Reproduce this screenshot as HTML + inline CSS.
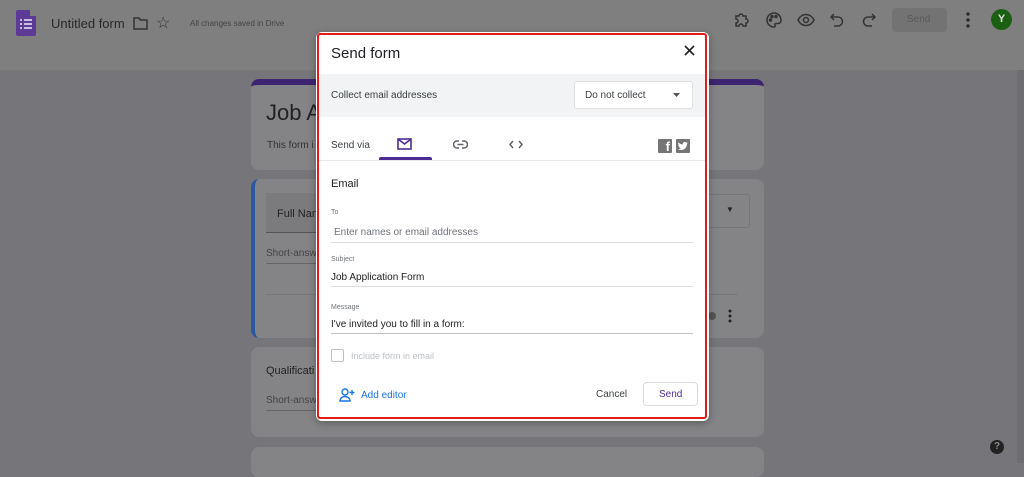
<!DOCTYPE html>
<html style="background:#767579"><head><meta charset="utf-8">
<style>
*{box-sizing:border-box;margin:0;padding:0}
html,body{background:#767579}
body{width:1024px;height:463px;overflow:hidden;font-family:"Liberation Sans",sans-serif;position:relative}
.top{position:absolute;left:0;top:0;width:1024px;height:71px;background:#7f7f7f;border-bottom:1px solid #777}
.abs{position:absolute}
.card{position:absolute;background:#848385;border-radius:8px}
.t{position:absolute;white-space:nowrap}
.dlg{position:absolute;left:316px;top:32px;width:393px;height:389px;background:#fff;border-radius:6px;box-shadow:0 2px 8px rgba(0,0,0,.3)}
.red{position:absolute;left:317px;top:33px;width:390px;height:386px;border:2px solid #e21b1b;border-radius:3px;pointer-events:none}
.line{position:absolute;height:1px;background:#dadce0}
</style></head><body>
<div class="top"></div>
<div class="abs" style="left:16px;top:10px;width:20px;height:26px;background:#5e3a97;border-radius:2px"></div>
<div class="abs" style="left:30px;top:10px;width:6px;height:6px;background:#7f7f7f"></div>
<svg class="abs" style="left:20px;top:18px" width="12" height="12"><g fill="#c9bde0"><rect x="0" y="1" width="2" height="2"/><rect x="4" y="1" width="8" height="2"/><rect x="0" y="5" width="2" height="2"/><rect x="4" y="5" width="8" height="2"/><rect x="0" y="9" width="2" height="2"/><rect x="4" y="9" width="8" height="2"/></g></svg>
<div class="t" style="left:51px;top:16px;font-size:13px;color:#2a2a2a">Untitled form</div>
<svg class="abs" style="left:133px;top:16px" width="15" height="14"><path d="M1 2h5l1.5 2H14v9H1z" fill="none" stroke="#333" stroke-width="1.5"/></svg>
<div class="t" style="left:156px;top:13px;font-size:16px;color:#333">☆</div>
<div class="t" style="left:190px;top:19px;font-size:8px;color:#444">All changes saved in Drive</div>
<svg class="abs" style="left:733px;top:12px" width="16" height="16" fill="none" stroke="#333" stroke-width="1.5"><path d="M3 4h3a2 2 0 014 0h3v3a2 2 0 010 4v3h-3a2 2 0 00-4 0H3v-3a2 2 0 000-4z"/></svg>
<svg class="abs" style="left:766px;top:12px" width="16" height="16" fill="none" stroke="#333" stroke-width="1.5"><path d="M8 1a7 7 0 000 14c1 0 1.5-.7 1-1.6-.5-.9 0-1.9 1-1.9h2a3 3 0 003-3C15 4 12 1 8 1z"/><circle cx="4.5" cy="8" r="1" fill="#333"/><circle cx="6" cy="4.5" r="1" fill="#333"/><circle cx="10" cy="4.5" r="1" fill="#333"/></svg>
<svg class="abs" style="left:797px;top:13px" width="18" height="14" fill="none" stroke="#333" stroke-width="1.5"><path d="M1 7c2-4 5-5.5 8-5.5S15 3 17 7c-2 4-5 5.5-8 5.5S3 11 1 7z"/><circle cx="9" cy="7" r="2.5"/></svg>
<svg class="abs" style="left:830px;top:13px" width="14" height="14" fill="none" stroke="#333" stroke-width="1.5"><path d="M4 1L1 4l3 3M1 4h7a4.5 4.5 0 010 9H4"/></svg>
<svg class="abs" style="left:862px;top:13px" width="14" height="14" fill="none" stroke="#333" stroke-width="1.5"><path d="M10 1l3 3-3 3M13 4H6a4.5 4.5 0 000 9h4"/></svg>
<div class="abs" style="left:892px;top:8px;width:55px;height:24px;background:#737373;border-radius:4px"></div>
<div class="t" style="left:907px;top:14px;font-size:10px;color:#5a5a5a">Send</div>
<svg class="abs" style="left:966px;top:12px" width="4" height="16" fill="#222"><circle cx="2" cy="2" r="1.6"/><circle cx="2" cy="8" r="1.6"/><circle cx="2" cy="14" r="1.6"/></svg>
<div class="abs" style="left:991px;top:9px;width:21px;height:21px;border-radius:50%;background:#1b5f12;color:#ddd;font-size:11px;text-align:center;line-height:21px;font-weight:bold">Y</div>
<div class="abs" style="left:1017px;top:70px;width:7px;height:393px;background:#6e6d70"></div>
<div class="card" style="left:251px;top:79px;width:513px;height:91px;border-top:6px solid #3c2470"></div>
<div class="t" style="left:266px;top:100px;font-size:22px;color:#222">Job A</div>
<div class="t" style="left:267px;top:140px;font-size:10px;color:#333">This form i</div>
<div class="card" style="left:251px;top:179px;width:513px;height:159px;border-left:4px solid #2d58a0"></div>
<div class="abs" style="left:266px;top:193px;width:60px;height:40px;background:#7b7a7d;border-bottom:1px solid #555"></div>
<div class="t" style="left:277px;top:208px;font-size:11px;color:#222">Full Nan</div>
<div class="abs" style="left:700px;top:194px;width:50px;height:34px;border:1px solid #777;border-radius:3px"></div>
<div class="t" style="left:726px;top:205px;font-size:8px;color:#222">▼</div>
<div class="t" style="left:266px;top:248px;font-size:10px;color:#444">Short-answ</div>
<div class="line" style="left:266px;top:263px;width:50px;background:#666"></div>
<div class="line" style="left:266px;top:294px;width:472px;background:#777"></div>
<svg class="abs" style="left:728px;top:309px" width="4" height="14" fill="#222"><circle cx="2" cy="2" r="1.5"/><circle cx="2" cy="7" r="1.5"/><circle cx="2" cy="12" r="1.5"/></svg>
<div class="abs" style="left:708px;top:312px;width:8px;height:8px;border-radius:50%;background:#555"></div>
<div class="card" style="left:251px;top:347px;width:513px;height:90px"></div>
<div class="t" style="left:266px;top:365px;font-size:11px;color:#222">Qualificati</div>
<div class="t" style="left:266px;top:395px;font-size:10px;color:#444">Short-answ</div>
<div class="line" style="left:266px;top:410px;width:50px;background:#666"></div>
<div class="card" style="left:251px;top:447px;width:513px;height:30px"></div>
<div class="abs" style="left:990px;top:440px;width:14px;height:14px;border-radius:50%;background:#222;color:#888;font-size:10px;text-align:center;line-height:14px;font-weight:bold">?</div>

<div class="dlg"></div>
<div class="t" style="left:331px;top:45px;font-size:15px;color:#202124">Send form</div>
<svg class="abs" style="left:684px;top:45px" width="11" height="11" stroke="#202124" stroke-width="1.6"><path d="M1 1l9 9M10 1l-9 9"/></svg>
<div class="abs" style="left:319px;top:74px;width:386px;height:43px;background:#f1f3f4"></div>
<div class="t" style="left:331px;top:90px;font-size:10px;color:#3c4043">Collect email addresses</div>
<div class="abs" style="left:574px;top:81px;width:119px;height:28px;background:#fff;border:1px solid #e0e0e0;border-radius:3px"></div>
<div class="t" style="left:585px;top:90px;font-size:10px;color:#3c4043">Do not collect</div>
<svg class="abs" style="left:673px;top:93px" width="7" height="4"><path d="M0 0h7L3.5 4z" fill="#555"/></svg>
<div class="t" style="left:331px;top:140px;font-size:10px;color:#3c4043">Send via</div>
<svg class="abs" style="left:397px;top:138px" width="15" height="12" fill="none" stroke="#4c2c92" stroke-width="1.6"><rect x="1" y="1" width="13" height="10"/><path d="M1 1l6.5 5L14 1"/></svg>
<div class="abs" style="left:379px;top:157px;width:53px;height:3px;background:#4c2c92;border-radius:2px 2px 0 0"></div>
<svg class="abs" style="left:453px;top:140px" width="15" height="9" fill="none" stroke="#5f6368" stroke-width="1.5"><path d="M6 1H4a3.5 3.5 0 000 7h2M9 1h2a3.5 3.5 0 010 7H9M4.5 4.5h6"/></svg>
<svg class="abs" style="left:509px;top:140px" width="14" height="9" fill="none" stroke="#5f6368" stroke-width="1.5"><path d="M4 1L1 4.5 4 8M10 1l3 3.5L10 8"/></svg>
<div class="abs" style="left:658px;top:139px;width:14px;height:14px;background:#757575;border-radius:1px;color:#fff;font-size:13px;font-weight:bold;line-height:16px;text-align:right;padding-right:2px;overflow:hidden">f</div>
<div class="abs" style="left:676px;top:139px;width:14px;height:14px;background:#757575;border-radius:1px"></div>
<svg class="abs" style="left:678px;top:142px" width="10" height="8"><path d="M10 1c-.4.2-.8.3-1.2.3.4-.3.8-.7.9-1.1-.4.2-.9.4-1.3.5C7.8.2 7.3 0 6.7 0 5.6 0 4.7.9 4.7 2c0 .2 0 .3.1.5C3 2.4 1.5 1.6.5.4c-.2.3-.3.6-.3 1 0 .7.4 1.3.9 1.7-.3 0-.6-.1-.9-.3 0 1 .7 1.8 1.6 2-.3.1-.6.1-.9 0 .3.8 1 1.4 1.9 1.4C2.1 6.8 1.1 7.1 0 7c.9.6 2 1 3.1 1 3.8 0 5.8-3.1 5.8-5.8V2c.4-.3.8-.6 1.1-1z" fill="#fff"/></svg>
<div class="line" style="left:319px;top:160px;width:386px;background:#e8eaed"></div>
<div class="t" style="left:331px;top:178px;font-size:11px;color:#202124">Email</div>
<div class="t" style="left:331px;top:209px;font-size:7px;color:#70757a">To</div>
<div class="t" style="left:334px;top:227px;font-size:10px;color:#70757a">Enter names or email addresses</div>
<div class="line" style="left:331px;top:242px;width:362px"></div>
<div class="t" style="left:331px;top:256px;font-size:7px;color:#70757a">Subject</div>
<div class="t" style="left:331px;top:272px;font-size:10px;color:#202124">Job Application Form</div>
<div class="line" style="left:331px;top:286px;width:362px"></div>
<div class="t" style="left:331px;top:304px;font-size:7px;color:#70757a">Message</div>
<div class="t" style="left:331px;top:319px;font-size:10px;color:#202124">I've invited you to fill in a form:</div>
<div class="line" style="left:331px;top:333px;width:362px;background:#bdc1c6"></div>
<div class="abs" style="left:331px;top:349px;width:13px;height:13px;border:1.5px solid #bdc1c6;border-radius:2px"></div>
<div class="t" style="left:351px;top:351px;font-size:9px;color:#bdc1c6">Include form in email</div>
<svg class="abs" style="left:339px;top:388px" width="17" height="14" fill="none" stroke="#1a73e8" stroke-width="1.4"><circle cx="6" cy="4" r="3"/><path d="M1 13c0-3 2.5-4.5 5-4.5s5 1.5 5 4.5zM13 2v5M10.5 4.5h5"/></svg>
<div class="t" style="left:361px;top:390px;font-size:10px;color:#1a73e8">Add editor</div>
<div class="t" style="left:596px;top:389px;font-size:10px;color:#3c4043">Cancel</div>
<div class="abs" style="left:643px;top:382px;width:55px;height:24px;border:1px solid #dadce0;border-radius:4px"></div>
<div class="t" style="left:659px;top:389px;font-size:10px;color:#4c2c92">Send</div>
<div class="red"></div>
</body></html>
